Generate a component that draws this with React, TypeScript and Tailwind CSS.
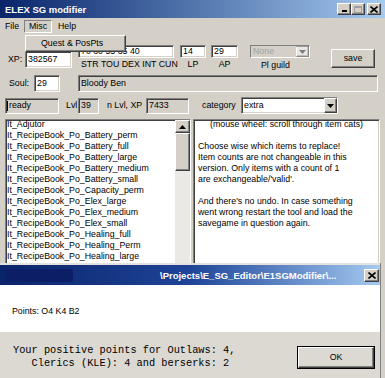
import React from "react";

const sunken =
  "border border-t-[#808080] border-l-[#808080] border-r-white border-b-white shadow-[inset_1px_1px_0_#404040,inset_-1px_-1px_0_#d4d0c8]";
const raised =
  "border border-t-white border-l-white border-r-[#404040] border-b-[#404040] shadow-[inset_-1px_-1px_0_#808080]";

function Down() {
  return (
    <svg width="7" height="4" viewBox="0 0 7 4">
      <path d="M0 0h7L3.5 4z" fill="#000" />
    </svg>
  );
}

function Combo({ w, h, text, disabled }: { w: string; h: string; text: string; disabled?: boolean }) {
  return (
    <div className={`${w} ${h} ${sunken} bg-white flex items-stretch`}>
      <div className={`flex-1 flex items-center pl-[2px] ${disabled ? "text-[#a0a0a0] bg-[#d4d0c8]" : ""}`}>{text}</div>
      <div className={`w-[13px] ${raised} bg-[#d4d0c8] flex items-center justify-center ${disabled ? "opacity-50" : ""}`}>
        <Down />
      </div>
    </div>
  );
}

const items = [
  "It_Adjutor",
  "It_RecipeBook_Po_Battery_perm",
  "It_RecipeBook_Po_Battery_full",
  "It_RecipeBook_Po_Battery_large",
  "It_RecipeBook_Po_Battery_medium",
  "It_RecipeBook_Po_Battery_small",
  "It_RecipeBook_Po_Capacity_perm",
  "It_RecipeBook_Po_Elex_large",
  "It_RecipeBook_Po_Elex_medium",
  "It_RecipeBook_Po_Elex_small",
  "It_RecipeBook_Po_Healing_full",
  "It_RecipeBook_Po_Healing_Perm",
  "It_RecipeBook_Po_Healing_large",
  "It_RecipeBook_Po_Healing_medium",
];

export default function App() {
  return (
    <div className="relative w-[385px] h-[378px] overflow-hidden bg-[#d4d0c8] text-black font-['Liberation_Sans',Arial,sans-serif] text-[8.8px] leading-[11px]">
      {/* Title bar */}
      <div className="h-[18px] flex items-center bg-linear-to-r from-[#0a246a] to-[#a6caf0]">
        <span className="pl-[5px] font-bold text-white text-[9.5px]">ELEX SG modifier</span>
        <div className="ml-auto mr-[4px] flex items-center">
          <div className={`w-[14px] h-[12px] bg-[#d4d0c8] ${raised} flex items-end justify-center pb-[2px]`}>
            <div className="w-[5px] h-[2px] bg-black" />
          </div>
          <div className={`w-[14px] h-[12px] bg-[#d4d0c8] ${raised} flex items-center justify-center`}>
            <div className="w-[8px] h-[7px] border border-t-2 border-[#a0a0a0]" />
          </div>
          <div className={`ml-[2px] w-[14px] h-[12px] bg-[#d4d0c8] ${raised} flex items-center justify-center`}>
            <svg width="8" height="7" viewBox="0 0 8 7">
              <path d="M0.5 0.5L7.5 6.5M7.5 0.5L0.5 6.5" stroke="#000" strokeWidth="1.6" />
            </svg>
          </div>
        </div>
      </div>

      {/* Menu bar */}
      <div className="h-[17px] flex items-center">
        <span className="w-[24px] pl-[5px]">File</span>
        <div className="w-[28px] h-[13px] border border-t-[#808080] border-l-[#808080] border-r-white border-b-white flex items-center justify-center">
          Misc
        </div>
        <span className="pl-[6px]">Help</span>
      </div>

      {/* Content */}
      <div className="pt-[10px]">
        {/* Row 1 */}
        <div className="flex h-[24px]">
          <div className="w-[78px] flex items-start pt-[6px]">
            <span className="pl-[8px] w-[25px] leading-[17px]">XP:</span>
            <div className={`w-[47px] h-[17px] bg-white ${sunken} flex items-center pl-[2px]`}>382567</div>
          </div>
          <div className="w-[96px] flex flex-col">
            <div className={`h-[17px] bg-white ${sunken} flex items-center pl-[2px]`}>70 60 55 35 40</div>
            <span className="pl-[3px] pt-[1px] whitespace-nowrap">STR TOU DEX INT CUN</span>
          </div>
          <div className="ml-[6px] w-[26px] flex flex-col">
            <div className={`h-[17px] bg-white ${sunken} flex items-center pl-[2px]`}>14</div>
            <span className="pt-[1px] text-center">LP</span>
          </div>
          <div className="ml-[5px] w-[27px] flex flex-col">
            <div className={`h-[17px] bg-white ${sunken} flex items-center pl-[2px]`}>29</div>
            <span className="pt-[1px] text-center">AP</span>
          </div>
          <div className="ml-[12px] w-[60px] flex flex-col">
            <Combo w="w-[60px]" h="h-[16px]" text="None" disabled />
            <span className="pt-[2px] pl-[11px]">Pl guild</span>
          </div>
          <div className={`ml-[21px] mt-[4px] w-[44px] h-[19px] bg-[#d4d0c8] ${raised} flex items-center justify-center`}>
            save
          </div>
        </div>

        {/* Row 2 */}
        <div className="mt-[6px] flex h-[17px] items-center">
          <span className="pl-[9px] w-[34px]">Soul:</span>
          <div className={`w-[26px] h-[17px] bg-white ${sunken} flex items-center pl-[2px]`}>29</div>
          <div className={`ml-[18px] w-[300px] h-[17px] bg-[#d4d0c8] ${sunken} flex items-center pl-[2px]`}>Bloody Ben</div>
        </div>

        {/* Row 3 */}
        <div className="mt-[5px] flex h-[17px] items-center">
          <div className={`ml-[5px] w-[54px] h-[16px] bg-[#d4d0c8] ${sunken} flex items-center pl-[1px]`}>
            <span className="w-px h-[10px] bg-black mr-px" />ready
          </div>
          <span className="ml-[7px] w-[12px]">Lvl</span>
          <div className={`w-[21px] h-[16px] bg-[#d4d0c8] ${sunken} flex items-center pl-[2px]`}>39</div>
          <span className="ml-[8px] w-[39px] whitespace-nowrap">n Lvl, XP</span>
          <div className={`w-[43px] h-[16px] bg-[#d4d0c8] ${sunken} flex items-center pl-[2px]`}>7433</div>
          <span className="ml-[13px] w-[39px]">category</span>
          <Combo w="w-[97px]" h="h-[17px]" text="extra" />
        </div>

        {/* Row 4 */}
        <div className="mt-[5px] flex h-[260px]">
          <div className={`ml-[5px] w-[186px] bg-white ${sunken} flex`}>
            <div className="flex-1 overflow-hidden pl-px -mt-[1px]">
              {items.map((t) => (
                <div key={t} className="h-[11px] whitespace-nowrap">{t}</div>
              ))}
            </div>
            <div className="w-[15px] flex flex-col bg-[#ebe9e5]">
              <div className={`h-[13px] bg-[#d4d0c8] ${raised} flex items-center justify-center`}>
                <svg width="7" height="4" viewBox="0 0 7 4">
                  <path d="M0 4h7L3.5 0z" fill="#000" />
                </svg>
              </div>
              <div className={`h-[38px] bg-[#d4d0c8] ${raised}`} />
            </div>
          </div>
          <div className={`ml-[2px] w-[187px] bg-white ${sunken} px-[4px] -mt-[0px]`}>
            <div className="-mt-[1px]">
              <div className="h-[11px] text-center whitespace-nowrap">(mouse wheel: scroll through item cats)</div>
              <div className="h-[11px]" />
              <div className="h-[11px] whitespace-nowrap">Choose wise which items to replace!</div>
              <div className="h-[11px] whitespace-nowrap">Item counts are not changeable in this</div>
              <div className="h-[11px] whitespace-nowrap">version. Only items with a count of 1</div>
              <div className="h-[11px] whitespace-nowrap">are exchangeable/'valid'.</div>
              <div className="h-[11px]" />
              <div className="h-[11px] whitespace-nowrap">And there's no undo. In case something</div>
              <div className="h-[11px] whitespace-nowrap">went wrong restart the tool and load the</div>
              <div className="h-[11px] whitespace-nowrap">savegame in question again.</div>
            </div>
          </div>
        </div>
      </div>

      {/* Misc dropdown menu */}
      <div className={`absolute left-[25px] top-[35px] w-[101px] h-[17px] bg-[#d4d0c8] ${raised} flex items-center pl-[15px]`}>
        Quest &amp; PosPts
      </div>

      {/* Message box window */}
      <div className="absolute left-0 top-[263px] w-[381px] bottom-0 flex flex-col border-r border-[#808080]">
        <div className="h-[2px] bg-[#e4e2de]" />
        <div className="h-[20px] flex items-center bg-linear-to-r from-[#0a246a] via-[#1f4498] to-[#a6caf0]">
          <div className="ml-[5px] w-[68px] h-[13px] bg-[#0c1f66] rounded-[2px]" />
          <div className="w-[87px]" />
          <span className="font-bold text-white text-[9.5px] whitespace-nowrap">\Projects\E_SG_Editor\E1SGModifier\...</span>
          <div className={`ml-auto mr-[1px] w-[15px] h-[13px] bg-[#d4d0c8] ${raised} flex items-center justify-center`}>
            <svg width="8" height="7" viewBox="0 0 8 7">
              <path d="M0.5 0.5L7.5 6.5M7.5 0.5L0.5 6.5" stroke="#000" strokeWidth="1.6" />
            </svg>
          </div>
        </div>
        <div className="h-[47px] bg-white pl-[12px] pt-[21px]">Points: O4 K4 B2</div>
        <div className="flex-1 bg-[#dcd9d3] flex">
          <div className="pl-[13px] pt-[12px] whitespace-pre font-['Liberation_Mono',monospace] text-[10.3px] leading-[13px]">
            {"Your positive points for Outlaws: 4,\n   Clerics (KLE): 4 and berserks: 2"}
          </div>
          <div className="ml-auto mt-[14px] mr-[5px] w-[78px] h-[23px] border border-black">
            <div className={`w-full h-full bg-[#dcd9d3] ${raised} flex items-center justify-center`}>OK</div>
          </div>
        </div>
      </div>
    </div>
  );
}
